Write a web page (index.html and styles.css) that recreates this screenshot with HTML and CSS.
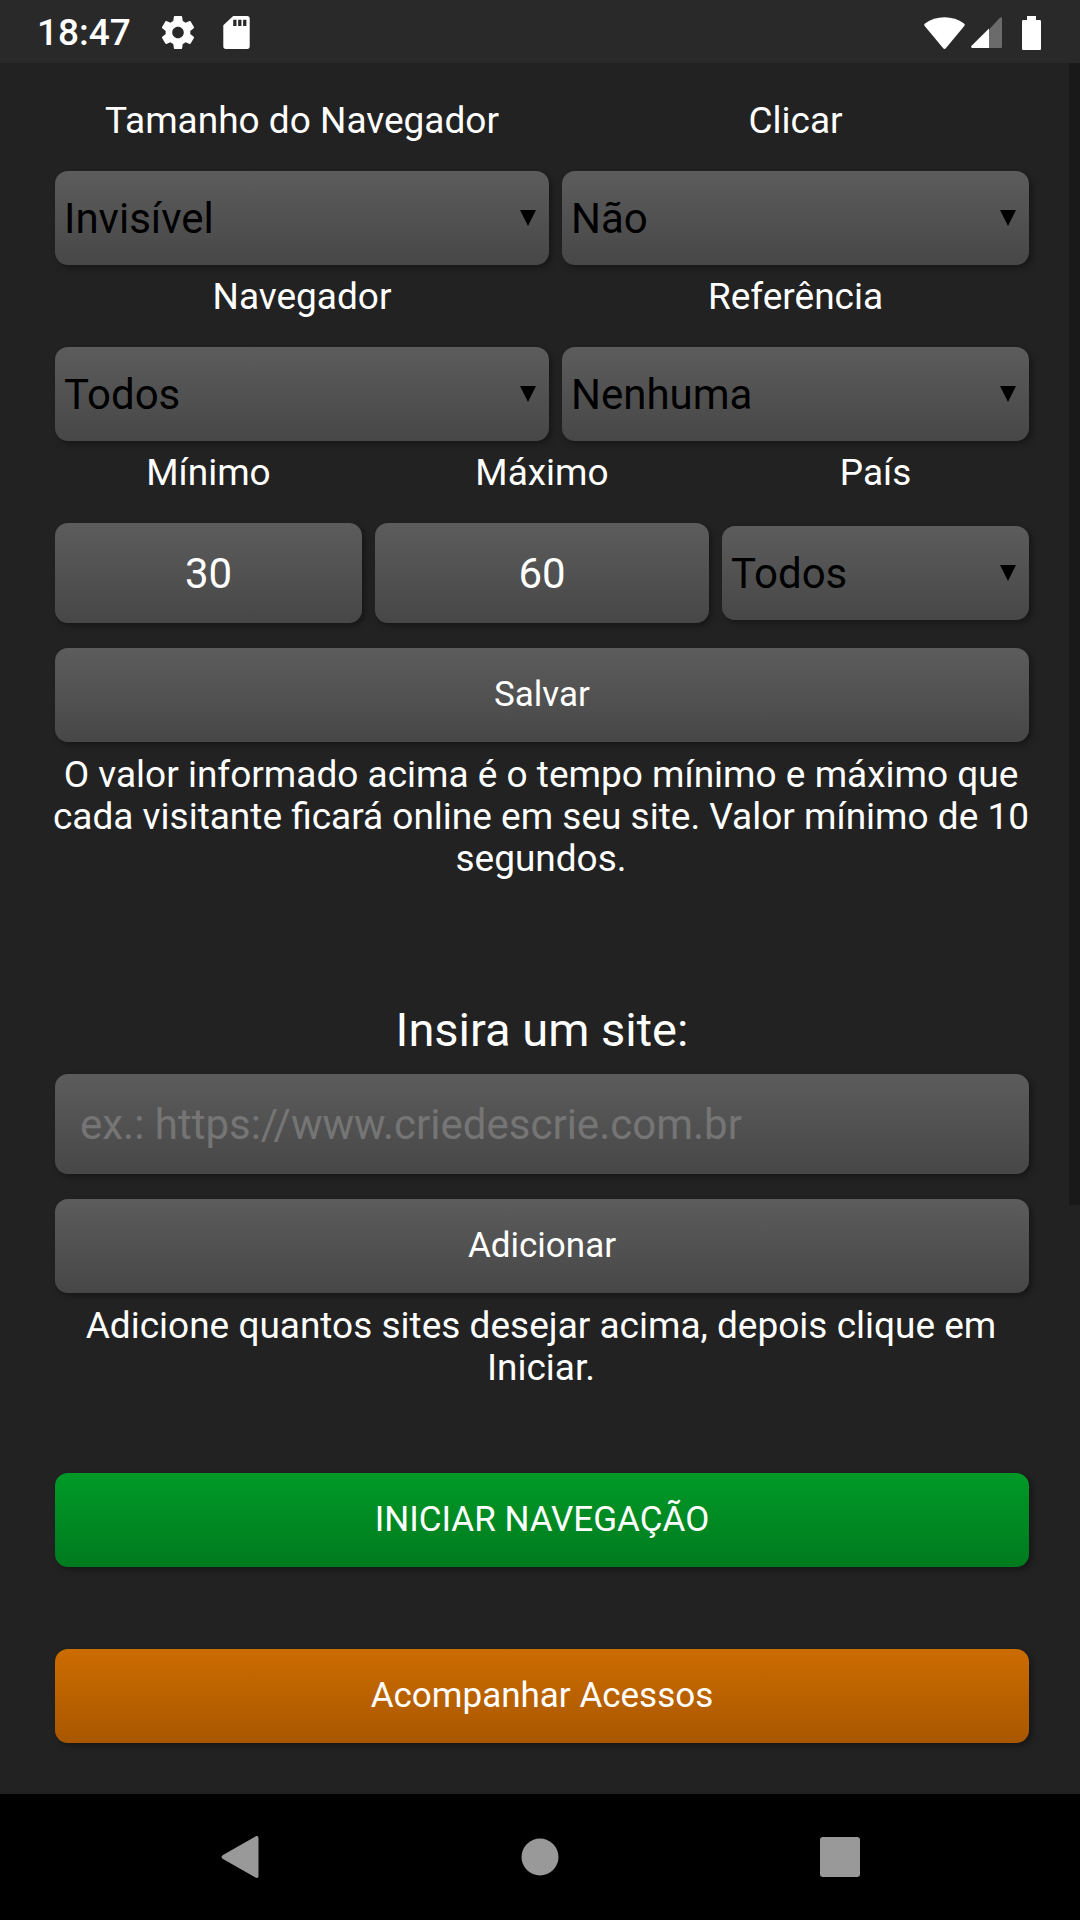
FILE: index.html
```html
<!DOCTYPE html>
<html lang="pt-BR">
<head>
  <meta charset="UTF-8">
  <meta name="viewport" content="width=device-width, initial-scale=1">
  <title>Navegador</title>
  <link rel="stylesheet" href="styles.css">
</head>
<body>
  <header class="status-bar">
    <time class="clock">18:47</time>
    <svg class="gear" width="32" height="33" viewBox="2.3 2 19.4 20" aria-hidden="true">
      <path fill="#fff" d="M19.43 12.98c.04-.32.07-.64.07-.98s-.03-.66-.07-.98l2.11-1.65c.19-.15.24-.42.12-.64l-2-3.46c-.12-.22-.39-.3-.61-.22l-2.49 1c-.52-.4-1.08-.73-1.69-.98l-.38-2.65C14.46 2.18 14.25 2 14 2h-4c-.25 0-.46.18-.49.42l-.38 2.65c-.61.25-1.17.59-1.69.98l-2.49-1c-.23-.09-.49 0-.61.22l-2 3.46c-.13.22-.07.49.12.64l2.11 1.65c-.04.32-.07.65-.07.98s.03.66.07.98l-2.11 1.65c-.19.15-.24.42-.12.64l2 3.46c.12.22.39.3.61.22l2.49-1c.52.4 1.08.73 1.69.98l.38 2.65c.03.24.24.42.49.42h4c.25 0 .46-.18.49-.42l.38-2.65c.61-.25 1.17-.59 1.69-.98l2.49 1c.23.09.49 0 .61-.22l2-3.46c.12-.22.07-.49-.12-.64l-2.11-1.65zM12 15.500c-1.930 0-3.500-1.570-3.500-3.500s1.570-3.500 3.500-3.500 3.500 1.570 3.500 3.500-1.570 3.500-3.500 3.500z"/>
    </svg>
    <svg width="27" height="33" viewBox="4 2 16 20" aria-hidden="true">
      <path fill="#fff" d="M18.500 2H10L4 7.600V20.500C4 21.400 4.600 22 5.500 22h13c.9 0 1.500-.6 1.500-1.500v-17c0-.9-.6-1.500-1.500-1.500zM12 8h-2V4.300h2zm3 0h-2V4.300h2zm3 0h-2V4.300h2z"/>
    </svg>
    <div class="signals">
      <svg width="41" height="32" viewBox="0 0 41 32" aria-hidden="true">
        <path fill="#fff" d="M1 6.500C12-2 29-2 40 6.500c1 .8 1 1.600.3 2.500L22 31c-1 1.200-2 1.200-3 0L.7 9C0 8.100 0 7.300 1 6.500z"/>
      </svg>
      <svg class="cell" width="31" height="31" viewBox="0 0 31 31" aria-hidden="true">
        <path fill="#6b6b6b" d="M18 12.500 29 .8c1-1 2-.6 2 .7V29.500c0 1-.5 1.500-1.500 1.500H18z"/>
        <path fill="#fff" d="M18 11.500V31H1.500C0 31-.4 29.700.6 28.700z"/>
      </svg>
      <svg class="battery" width="19" height="34" viewBox="0 0 19 34" aria-hidden="true">
        <path fill="#fff" d="M5 0h9v4h3.500C18.500 4 19 4.500 19 5.500v27c0 1-.5 1.500-1.500 1.500h-16C.5 34 0 33.500 0 32.500v-27C0 4.500.5 4 1.500 4H5z"/>
      </svg>
    </div>
  </header>

  <main class="page">
    <div class="scroll-thumb"></div>

    <form class="settings">
      <div class="row row-two">
        <div class="field">
          <label for="tamanho">Tamanho do Navegador</label>
          <select id="tamanho" class="box">
            <option>Invisível</option>
          </select>
        </div>
        <div class="field">
          <label for="clicar">Clicar</label>
          <select id="clicar" class="box">
            <option>Não</option>
          </select>
        </div>
      </div>
      <div class="row row-two">
        <div class="field">
          <label for="navegador">Navegador</label>
          <select id="navegador" class="box">
            <option>Todos</option>
          </select>
        </div>
        <div class="field">
          <label for="referencia">Referência</label>
          <select id="referencia" class="box">
            <option>Nenhuma</option>
          </select>
        </div>
      </div>
      <div class="row row-three">
        <div class="field">
          <label for="minimo">Mínimo</label>
          <input id="minimo" class="box number" type="text" inputmode="numeric" value="30">
        </div>
        <div class="field">
          <label for="maximo">Máximo</label>
          <input id="maximo" class="box number" type="text" inputmode="numeric" value="60">
        </div>
        <div class="field">
          <label for="pais">País</label>
          <select id="pais" class="box">
            <option>Todos</option>
          </select>
        </div>
      </div>
      <button type="button" class="box btn">Salvar</button>
      <p class="hint">O valor informado acima é o tempo mínimo e máximo que cada visitante ficará online em seu site. Valor mínimo de 10 segundos.</p>
    </form>

    <form class="sites">
      <label class="title" for="site">Insira um site:</label>
      <input id="site" class="box" type="url" placeholder="ex.: https://www.criedescrie.com.br">
      <button type="button" class="box btn">Adicionar</button>
      <p class="hint">Adicione quantos sites desejar acima, depois clique em Iniciar.</p>
    </form>

    <div class="actions">
      <button type="button" class="box btn green">INICIAR NAVEGAÇÃO</button>
      <button type="button" class="box btn orange">Acompanhar Acessos</button>
    </div>
  </main>

  <nav class="nav-bar">
    <button type="button" aria-label="Voltar">
      <svg width="40" height="42" viewBox="0 0 40 42">
        <path fill="#999" d="M35.500.5C37-.5 38.500.2 38.500 2v38c0 1.800-1.500 2.500-3 1.500L3 23c-2-1.200-2-2.800 0-4z"/>
      </svg>
    </button>
    <button type="button" aria-label="Início">
      <svg width="38" height="38" viewBox="0 0 38 38"><circle cx="19" cy="19" r="18.500" fill="#999"/></svg>
    </button>
    <button type="button" aria-label="Recentes">
      <svg width="40" height="40" viewBox="0 0 40 40"><rect width="40" height="40" rx="3" fill="#999"/></svg>
    </button>
  </nav>
</body>
</html>
```

FILE: styles.css
```css
* {
  box-sizing: border-box;
}
body {
  margin: 0;
  min-height: 100vh;
  display: flex;
  flex-direction: column;
  background: #222;
  color: #fff;
  font-family: Roboto, sans-serif;
  font-size: 37px;
  line-height: 42px;
}
svg {
  display: block;
}

/* status bar */
.status-bar {
  display: flex;
  align-items: center;
  height: 63px;
  padding: 2px 39px 0 37px;
  background: #292929;
}
.clock {
  font-weight: 500;
}
.gear {
  margin: 0 29px 0 31px;
}
.signals {
  display: flex;
  align-items: center;
  margin-left: auto;
}
.cell {
  margin: 0 20px 0 6px;
}

/* page */
.page {
  position: relative;
  flex: 1;
  padding: 26px 51px 51px 55px;
}
.scroll-thumb {
  position: absolute;
  top: 0;
  right: 0;
  width: 11px;
  height: 66%;
  background: #191919;
}
.row {
  display: grid;
  gap: 13px;
}
.row-two {
  grid-template-columns: 494fr 467fr;
}
.row-three {
  grid-template-columns: 307fr 334fr 307fr;
}
.field {
  display: flex;
  flex-direction: column;
  min-width: 0;
}
.field label {
  padding: 11px 0 29px;
  text-align: center;
}

/* fields and buttons */
.box {
  display: block;
  width: 100%;
  height: 94px;
  border: 0;
  border-radius: 13px;
  background: linear-gradient(#5c5c5c, #474747);
  box-shadow: 3px 3px 6px rgba(0, 0, 0, 0.35);
  color: #fff;
  font-family: inherit;
  font-size: 42px;
}
select.box {
  appearance: none;
  margin: auto 0;
  padding: 0 40px 0 9px;
  color: #000;
  background:
    url("data:image/svg+xml,%3Csvg xmlns='http://www.w3.org/2000/svg' width='16' height='16'%3E%3Cpath d='M0 0h16L8 16z'/%3E%3C/svg%3E") right 13px center no-repeat,
    linear-gradient(#5c5c5c, #474747);
}
input.box {
  height: 100px;
  padding: 0 25px;
}
input.number {
  text-align: center;
}
input::placeholder {
  color: #757575;
}
.btn {
  margin-top: 25px;
  padding: 0 0 2px;
  font-size: 35px;
}
/* a little wider than the boxes above */
.hint {
  margin: 12px -4px 0 -6px;
  text-align: center;
}
.sites {
  margin-top: 122px;
}
.title {
  display: block;
  margin-bottom: 16px;
  font-size: 47px;
  line-height: 56px;
  text-align: center;
}
.actions {
  display: grid;
  gap: 82px;
  margin-top: 84px;
}
.actions .btn {
  margin: 0;
}
.green {
  background: linear-gradient(#009a28, #007a1e);
}
.orange {
  background: linear-gradient(#cc6c00, #a85700);
}

/* navigation bar */
.nav-bar {
  display: grid;
  grid-template-columns: repeat(3, 1fr);
  height: 126px;
  padding: 0 90px;
  background: #000;
}
.nav-bar button {
  display: flex;
  align-items: center;
  justify-content: center;
  padding: 0;
  border: 0;
  background: none;
}
```
